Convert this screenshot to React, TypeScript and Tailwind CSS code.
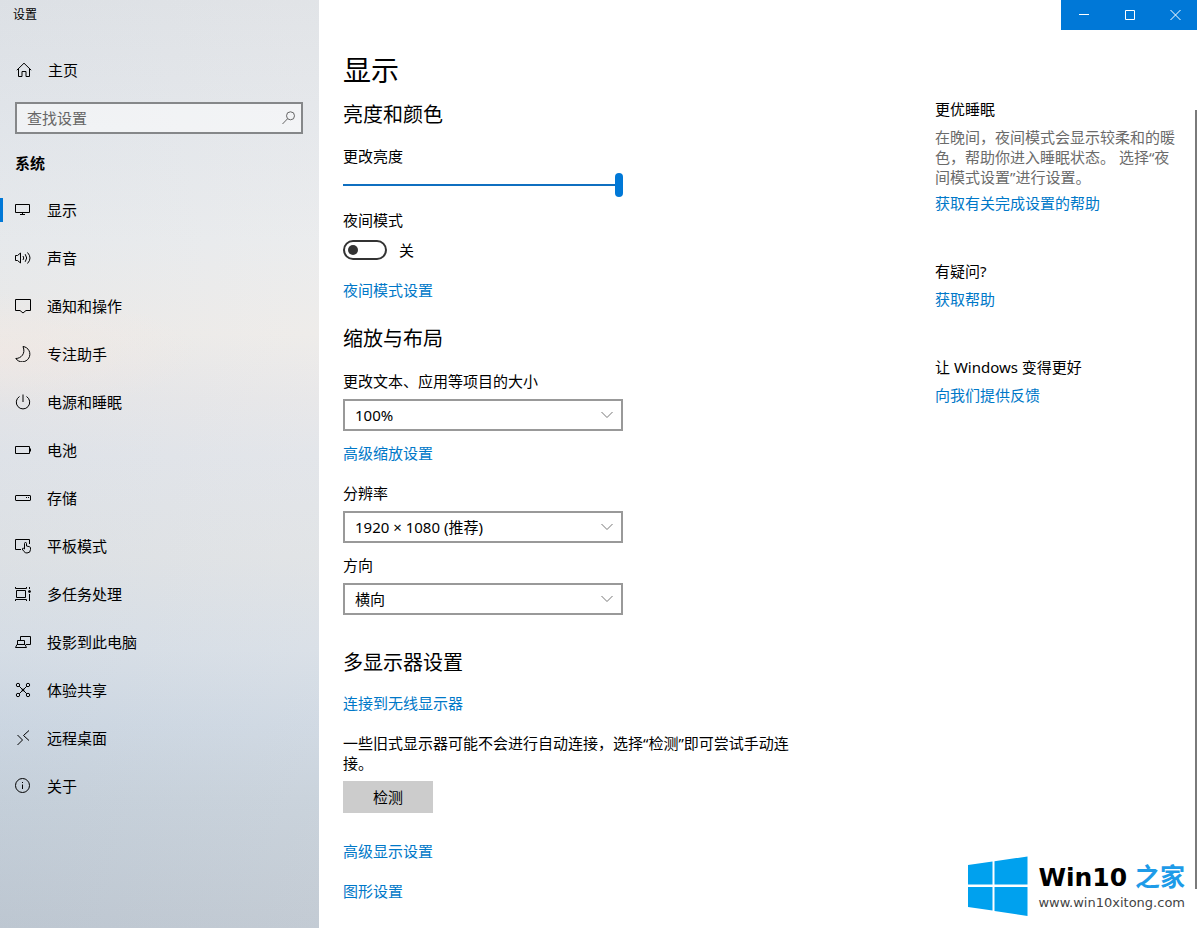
import { useState } from 'react'
import type { ReactNode } from 'react'

function Icon({ children }: { children: ReactNode }) {
  return (
    <svg className="size-4 shrink-0" viewBox="0 0 16 16" fill="none" stroke="#000" aria-hidden="true">
      {children}
    </svg>
  )
}

const navItems: { label: string; icon: ReactNode }[] = [
  { label: '显示', icon: <path d="M.5 2.5h14v8H.5zM7.5 10.5v2M5 12.5h5" /> },
  {
    label: '声音',
    icon: (
      <>
        <path d="M.5 5.5h2L5.5 3v10l-3-2.5h-2z" />
        <path d="M8 6q1.5 2 0 4M10.2 4.2q3 3.8 0 7.6M12.5 2.5q5 5.5 0 11" />
      </>
    ),
  },
  { label: '通知和操作', icon: <path d="M.5 1.5h15v11H11L8 15l-3-2.5H.5z" /> },
  { label: '专注助手', icon: <path d="M8 .5A7.7 7.7 0 1 1 .8 12.5C6 12.5 11 7.5 8 .5z" /> },
  { label: '电源和睡眠', icon: <path d="M8 .5V8M4.5 2.5a6.7 6.7 0 1 0 7 0" /> },
  { label: '电池', icon: <path d="M.5 4.5h14v7H.5zM15.5 6.5v3" /> },
  {
    label: '存储',
    icon: (
      <>
        <rect x=".5" y="5.5" width="15" height="5" rx=".5" />
        <path d="M11 7.5h1M13 7.5h1" />
      </>
    ),
  },
  {
    label: '平板模式',
    icon: (
      <>
        <path d="M6 11.5H.5v-10h14V6" />
        <path d="M9.5 11V5.5q0-1 1-1t1 1V8l3 .7q1 .3 1 1.3v1.500q0 3.500-3.500 3.500-2 0-3-1.500L7.200 11q.3-1 1.300-.7z" />
      </>
    ),
  },
  {
    label: '多任务处理',
    icon: (
      <>
        <path d="M.5 1v1.500h11V1M1.500 4.500h9v7h-9zM.5 15v-1.500h11V15M14.500 1v2M14.500 8v7" />
        <circle cx="14.500" cy="5.500" r="1" fill="#000" />
      </>
    ),
  },
  { label: '投影到此电脑', icon: <path d="M5.500 6V2.500h10v8H11M2.500 10.500v-4h7v4M.5 13.500h11l-1.500-3H2z" /> },
  {
    label: '体验共享',
    icon: (
      <>
        <path d="M4.200 4.200l7.600 7.600M11.800 4.200l-7.600 7.600" />
        <circle cx="3" cy="3" r="1.700" />
        <circle cx="13" cy="3" r="1.700" />
        <circle cx="3" cy="13" r="1.700" />
        <circle cx="13" cy="13" r="1.700" />
        <circle cx="8" cy="8" r="1" fill="#000" />
      </>
    ),
  },
  { label: '远程桌面', icon: <path d="M2.500 5l5 5-5 5M14 .5l-5.500 5L14 10.500" /> },
  {
    label: '关于',
    icon: (
      <>
        <circle cx="7.500" cy="7.500" r="7" />
        <path d="M7.500 6.500V11M7.500 4v1" />
      </>
    ),
  },
]

function Sidebar() {
  return (
    <aside className="w-[319px] shrink-0 bg-[radial-gradient(ellipse_200px_60px_at_0_38%,rgba(245,232,225,0.5),transparent),linear-gradient(90deg,rgba(170,190,210,0.05),rgba(255,250,245,0.08)),linear-gradient(180deg,#dfe2e6_0%,#e4e7eb_14%,#e9ebed_26%,#edebe9_36%,#e6e6e8_43%,#e1e4e9_49%,#dfe2e5_60%,#d7dee6_70%,#cdd7e2_78%,#c6d0da_86%,#bec7d1_100%)]">
      <div className="h-[30px] pl-[13px] text-xs leading-[30px]">设置</div>
      <a href="#home" className="mt-[30px] flex h-5 items-center gap-4 pl-4">
        <Icon>
          <path d="M.8 8.200L8 1.200l7.200 7M2.500 7v7.500h3.500v-5h4v5h3.500V7" />
        </Icon>
        主页
      </a>
      <div className="relative mt-[22px] mr-4 ml-[15px]">
        <input
          type="text"
          aria-label="查找设置"
          placeholder="查找设置"
          className="block h-8 w-full border-2 border-[#858789] bg-white/50 pr-8 pl-[10px] outline-none placeholder:text-[#666]"
        />
        <svg className="absolute top-2 right-[6px] size-4" viewBox="0 0 16 16" fill="none" stroke="#666" aria-hidden="true">
          <circle cx="9.500" cy="5.800" r="4" />
          <path d="M6.600 8.700L1.500 14" />
        </svg>
      </div>
      <h2 className="mt-[19px] pl-[15px] font-bold">系统</h2>
      <nav className="mt-[13px]">
        {navItems.map((item, i) => (
          <a key={item.label} href="#" className="relative flex h-12 items-center gap-4 pl-[15px] hover:bg-black/5">
            {i === 0 && <span className="absolute left-0 h-6 w-[3px] bg-[#0078d7]" />}
            <Icon>{item.icon}</Icon>
            {item.label}
          </a>
        ))}
      </nav>
    </aside>
  )
}

function WindowControls() {
  return (
    <div className="flex justify-end">
      <div className="flex h-[30px] bg-[#0078d7]">
        <button aria-label="最小化" className="grid w-[46px] place-items-center">
          <svg className="size-[11px]" viewBox="0 0 11 11" stroke="#fff">
            <path d="M0 4.500h10" />
          </svg>
        </button>
        <button aria-label="最大化" className="grid w-[46px] place-items-center">
          <svg className="size-[11px]" viewBox="0 0 11 11" fill="none" stroke="#fff">
            <path d="M.5.5h9v9h-9z" />
          </svg>
        </button>
        <button aria-label="关闭" className="grid w-11 place-items-center">
          <svg className="size-[11px]" viewBox="0 0 11 11" stroke="#fff">
            <path d="M.5 0l10 10M10.500 0l-10 10" />
          </svg>
        </button>
      </div>
    </div>
  )
}

function SettingLink({ children }: { children: ReactNode }) {
  return (
    <a href="#" className="block w-fit text-[#0078c8] hover:text-gray-500">
      {children}
    </a>
  )
}

function SelectField({ id, label, options }: { id: string; label: string; options: string[] }) {
  return (
    <div>
      <label htmlFor={id} className="block">
        {label}
      </label>
      <div className="relative mt-2 w-[280px]">
        <select id={id} className="block h-8 w-full appearance-none border-2 border-[#999] bg-white pr-8 pl-[10px]">
          {options.map((o) => (
            <option key={o}>{o}</option>
          ))}
        </select>
        <svg className="pointer-events-none absolute top-3 right-[10px] h-2 w-3" viewBox="0 0 12 8" fill="none" stroke="#777" aria-hidden="true">
          <path d="M.5 1L6 6.500 11.500 1" />
        </svg>
      </div>
    </div>
  )
}

function DisplaySettings() {
  const [brightness, setBrightness] = useState(100)
  const [night, setNight] = useState(false)

  return (
    <main className="min-w-0 flex-1 pb-6">
      <h1 className="text-[28px] leading-9">显示</h1>

      <section className="mt-[15px]">
        <h2 className="text-xl leading-6">亮度和颜色</h2>
        <label htmlFor="brightness" className="mt-[19px] block">
          更改亮度
        </label>
        <input
          id="brightness"
          type="range"
          value={brightness}
          onChange={(e) => setBrightness(Number(e.target.value))}
          className="mt-[7px] block h-6 w-[280px] appearance-none bg-transparent [&::-webkit-slider-runnable-track]:h-[2px] [&::-webkit-slider-runnable-track]:bg-[#0f6fc0] [&::-webkit-slider-thumb]:mt-[-11px] [&::-webkit-slider-thumb]:h-6 [&::-webkit-slider-thumb]:w-2 [&::-webkit-slider-thumb]:appearance-none [&::-webkit-slider-thumb]:rounded-full [&::-webkit-slider-thumb]:bg-[#0078d7]"
        />
        <label htmlFor="night" className="mt-[13px] block">
          夜间模式
        </label>
        <div className="mt-[10px] flex items-center gap-3">
          <input
            id="night"
            type="checkbox"
            role="switch"
            checked={night}
            onChange={(e) => setNight(e.target.checked)}
            className="flex h-5 w-11 appearance-none items-center rounded-full border-2 border-[#333] px-[3px] before:size-[10px] before:rounded-full before:bg-[#333] checked:justify-end checked:border-[#0078d7] checked:bg-[#0078d7] checked:before:bg-white"
          />
          <span>{night ? '开' : '关'}</span>
        </div>
        <div className="mt-5">
          <SettingLink>夜间模式设置</SettingLink>
        </div>
      </section>

      <section className="mt-[27px]">
        <h2 className="text-xl leading-6">缩放与布局</h2>
        <div className="mt-5">
          <SelectField id="scale" label="更改文本、应用等项目的大小" options={['100%', '125%', '150%']} />
        </div>
        <div className="mt-3">
          <SettingLink>高级缩放设置</SettingLink>
        </div>
        <div className="mt-5">
          <SelectField id="resolution" label="分辨率" options={['1920 × 1080 (推荐)', '1600 × 900', '1280 × 720']} />
        </div>
        <div className="mt-3">
          <SelectField id="orientation" label="方向" options={['横向', '纵向']} />
        </div>
      </section>

      <section className="mt-9">
        <h2 className="text-xl leading-6">多显示器设置</h2>
        <div className="mt-[18px]">
          <SettingLink>连接到无线显示器</SettingLink>
        </div>
        <p className="mt-5 max-w-[456px]">一些旧式显示器可能不会进行自动连接，选择“检测”即可尝试手动连接。</p>
        <button className="mt-2 block h-8 w-[90px] bg-[#ccc] hover:bg-[#bbb]">检测</button>
        <div className="mt-7 space-y-5">
          <SettingLink>高级显示设置</SettingLink>
          <SettingLink>图形设置</SettingLink>
        </div>
      </section>
    </main>
  )
}

function HelpPanel() {
  return (
    <aside className="mt-[47px] w-[262px] shrink-0 pr-5">
      <h3>更优睡眠</h3>
      <p className="mt-2 text-[#6b6b6b]">在晚间，夜间模式会显示较柔和的暖色，帮助你进入睡眠状态。 选择“夜间模式设置”进行设置。</p>
      <div className="mt-[6px]">
        <SettingLink>获取有关完成设置的帮助</SettingLink>
      </div>
      <h3 className="mt-12">有疑问?</h3>
      <div className="mt-2">
        <SettingLink>获取帮助</SettingLink>
      </div>
      <h3 className="mt-12">让 Windows 变得更好</h3>
      <div className="mt-2">
        <SettingLink>向我们提供反馈</SettingLink>
      </div>
    </aside>
  )
}

function Watermark() {
  return (
    <div className="absolute right-3 bottom-3 flex items-center gap-[10px] font-['DejaVu_Sans','Noto_Sans_CJK_SC',sans-serif]">
      <svg className="h-[60px] w-[60px]" viewBox="0 0 60 60" fill="#00a1ee" aria-hidden="true">
        <path d="M0 9l24.500-3.500v23H0zM26.500 5.200L59.500.5v28h-33zM0 31h24.500v23.500L0 51zM26.500 31h33v29l-33-5z" />
      </svg>
      <div className="pt-1">
        <div className="flex items-center justify-between text-[25px] leading-[30px] font-bold">
          Win10 <span className="text-[#1e9be8]">之家</span>
        </div>
        <div className="text-[13px] leading-5 text-[#444]">www.win10xitong.com</div>
      </div>
    </div>
  )
}

export default function App() {
  return (
    <div
      lang="zh-CN"
      className="relative flex min-h-screen bg-white font-['Noto_Sans','Noto_Sans_CJK_SC',sans-serif] text-[15px] leading-5 text-black"
    >
      <Sidebar />
      <div className="flex min-w-0 flex-1 flex-col">
        <WindowControls />
        <div className="mt-[22px] flex flex-1 pl-6">
          <DisplaySettings />
          <HelpPanel />
        </div>
      </div>
      {/* Thin scroll indicator */}
      <div className="absolute top-[110px] right-0 bottom-[39px] w-[2px] bg-[#7a7a7a]" />
      <Watermark />
    </div>
  )
}
